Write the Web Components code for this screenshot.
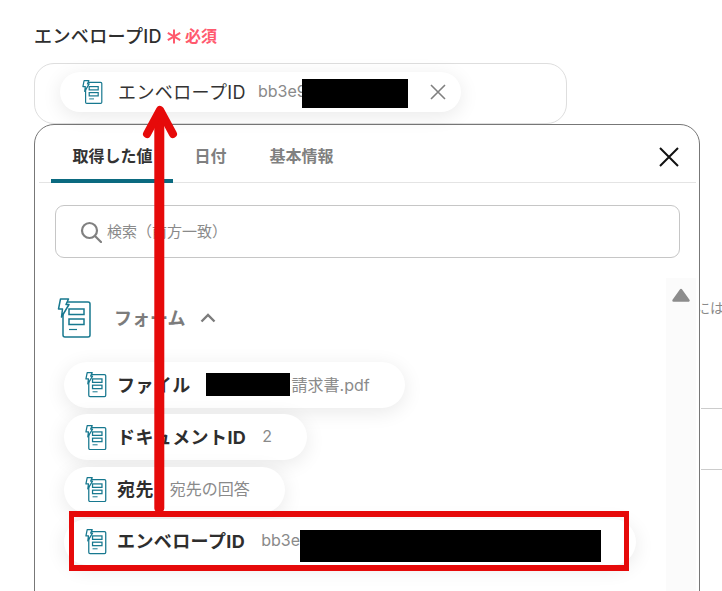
<!DOCTYPE html>
<html lang="ja">
<head>
<meta charset="utf-8">
<title>エンベロープID</title>
<style>
    html, body {margin: 0; height: 591px; overflow: hidden; background: #fff;}
    body {font-family: "Inter", "Noto Sans CJK JP", sans-serif; color: #2e2e2e;}
</style>
</head>
<body>
<form-page>
    <field-label slot="field" required>エンベロープID</field-label>
    <token-field slot="field" label="エンベロープID" value="bb3e9" mask="106"></token-field>
    <picker-panel slot="field">
        <picker-section title="フォーム">
            <value-chip label="ファイル"><mask-bar width="84" height="23" style="margin-left: -1px; top: -1px"></mask-bar><span style="margin-left: 2px">請求書.pdf</span></value-chip>
            <value-chip label="ドキュメントID"><span>2</span></value-chip>
            <value-chip label="宛先"><span>宛先の回答</span></value-chip>
            <value-chip label="エンベロープID"><span>bb3e</span><mask-bar width="301" height="32" style="top: 4px"></mask-bar></value-chip>
        </picker-section>
    </picker-panel>
    <side-peek slot="side"></side-peek>
</form-page>
<call-out></call-out>

<script>
class FormIcon extends HTMLElement {
    constructor() {
        super();
        this.attachShadow({ mode: 'open' });
    }

    connectedCallback() {
        var w = this.getAttribute('size') || 22
        var sw = this.getAttribute('stroke') || 2
        this.shadowRoot.innerHTML = `
<style>
    :host {display: block; flex: none; line-height: 0;}
</style>
<svg width="${w}" viewBox="0 0 35 40" fill="none" stroke="#17788f" stroke-width="${sw}">
    <rect x="6" y="4" width="27" height="35" rx="2"/>
    <rect x="12" y="11" width="15" height="5.5"/>
    <rect x="12" y="21" width="15" height="5.5"/>
    <path d="M12 31.500H20" stroke-width="${sw * 0.8}"/>
    <path d="M3.500 1H11.500L9 6.500H12L4.500 19L5.500 11H1.500Z" fill="#fff" stroke-linejoin="round"/>
</svg>`
    }
}
window.customElements.define('form-icon', FormIcon);

class MaskBar extends HTMLElement {
    constructor() {
        super();
        this.attachShadow({ mode: 'open' });
    }

    connectedCallback() {
        this.shadowRoot.innerHTML = `
<style>
    :host {display: block; flex: none; background: #000; position: relative;
        width: ${this.getAttribute('width')}px; height: ${this.getAttribute('height')}px;}
</style>`
    }
}
window.customElements.define('mask-bar', MaskBar);

class FormPage extends HTMLElement {
    constructor() {
        super();
        this.attachShadow({ mode: 'open' });
    }

    connectedCallback() {
        this.shadowRoot.innerHTML = `
<style>
    :host {display: flex; height: 591px; overflow: hidden;}
    .main {width: 666px; flex: none; margin-left: 34px; padding-top: 26px; position: relative; z-index: 1;}
    .side {flex: 1; min-width: 0;}
</style>
<div class="main"><slot name="field"></slot></div>
<div class="side"><slot name="side"></slot></div>`
    }
}
window.customElements.define('form-page', FormPage);

class FieldLabel extends HTMLElement {
    constructor() {
        super();
        this.attachShadow({ mode: 'open' });
    }

    connectedCallback() {
        this.shadowRoot.innerHTML = `
<style>
    :host {display: flex; align-items: center; height: 20px; margin-bottom: 17px;
        font-size: 18px; font-weight: 500; color: #2e2e2e; white-space: nowrap; letter-spacing: .4px;}
    .txt {padding-bottom: 2px;}
    .star {width: 14px; height: 15px; margin: 0 4px 0 5px;}
    .req {font-size: 16px; font-weight: 700; color: #ff5a6e; letter-spacing: 0; padding-bottom: 2px;}
</style>
<span class="txt"><slot></slot></span>
<svg class="star" viewBox="0 0 14 15" stroke="#ff5a6e" stroke-width="2">
    <path d="M7 0.500V14.500M0.800 3.800L13.200 11.200M13.200 3.800L0.800 11.200"/>
</svg>
<span class="req">必須</span>`
    }
}
window.customElements.define('field-label', FieldLabel);

class TokenField extends HTMLElement {
    constructor() {
        super();
        this.attachShadow({ mode: 'open' });
    }

    connectedCallback() {
        this.shadowRoot.innerHTML = `
<style>
    :host {display: block; box-sizing: border-box; width: 533px; height: 61px;
        border: 1px solid #dedede; border-radius: 20px; padding: 8px 0 0 25px; background: #fff;}
    .chip {display: inline-flex; align-items: center; box-sizing: border-box; height: 40px; width: 401px;
        padding-left: 22px; border-radius: 20px; background: #fff;
        box-shadow: 0 4px 20px rgba(0,0,0,.09); white-space: nowrap;}
    .label {font-size: 18px; margin-left: 15px; color: #333; letter-spacing: .4px; padding-bottom: 2px;}
    .value {font-size: 16px; color: #8a8a8a; margin-left: 12px; padding-bottom: 2px;}
    mask-bar {margin-left: -5px; top: 1px;}
    .close {margin-left: 22px; width: 16px; height: 16px;}
</style>
<div class="chip">
    <form-icon size="21"></form-icon>
    <span class="label">${this.getAttribute('label')}</span>
    <span class="value">${this.getAttribute('value')}</span>
    <mask-bar width="${this.getAttribute('mask')}" height="29"></mask-bar>
    <svg class="close" viewBox="0 0 16 16" stroke="#808080" stroke-width="1.600">
        <path d="M1 1L15 15M15 1L1 15"/>
    </svg>
</div>`
    }
}
window.customElements.define('token-field', TokenField);

class PickerPanel extends HTMLElement {
    constructor() {
        super();
        this.attachShadow({ mode: 'open' });
    }

    connectedCallback() {
        this.shadowRoot.innerHTML = `
<style>
    :host {display: block; box-sizing: border-box; width: 666px; height: 520px; background: #fff;
        border: 1px solid #777; border-radius: 20px; overflow: hidden;}
    .tabs {display: flex; align-items: center; height: 57px; margin: 0 3px 0 4px; padding-left: 12px;
        border-bottom: 1px solid #e4e4e4; position: relative;}
    .tab {display: flex; align-items: center; height: 100%; padding: 2px 21.500px 0; box-sizing: border-box;
        font-size: 16px; font-weight: 700; color: #808080; white-space: nowrap;}
    .tab.on {color: #333; width: 122px; border-bottom: 4px solid #0b6a80; border-radius: 5px 5px 0 0;
        padding-top: 6px; margin-bottom: -1px; height: calc(100% + 1px);}
    .x {margin: 6px 17px 0 auto; width: 20px; height: 20px;}
    .search {display: flex; align-items: center; box-sizing: border-box; height: 53px;
        margin: 22px 19px 0 20px; padding-left: 24px; border: 1px solid #c6c6c6; border-radius: 9px;
        font-size: 15px; color: #8a8a8a;}
    .search svg {width: 22px; height: 22px; margin-right: 5px;}
    .search span {padding-bottom: 2px;}
    .body {display: flex; margin-top: 20px; height: 320px;}
    .list {flex: 1; min-width: 0;}
    .scroll {flex: none; width: 30px; margin-right: 3px; background: #fbfbfb; display: flex; justify-content: center; padding-top: 10px;}
    .scroll svg {width: 18px; height: 14px;}
</style>
<div class="tabs">
    <div class="tab on">取得した値</div>
    <div class="tab">日付</div>
    <div class="tab">基本情報</div>
    <svg class="x" viewBox="0 0 20 20" stroke="#111" stroke-width="2"><path d="M1 1L19 19M19 1L1 19"/></svg>
</div>
<div class="search">
    <svg viewBox="0 0 22 22" fill="none" stroke="#808080" stroke-width="2.200"><circle cx="9.500" cy="9.500" r="7.500"/><path d="M15 15L21 21" stroke-linecap="round"/></svg>
    <span>検索（前方一致）</span>
</div>
<div class="body">
    <div class="list"><slot></slot></div>
    <div class="scroll"><svg viewBox="0 0 18 14"><path d="M9 2L16.500 12.500H1.500Z" fill="#8c8c8c" stroke="#8c8c8c" stroke-width="2.400" stroke-linejoin="round"/></svg></div>
</div>`
    }
}
window.customElements.define('picker-panel', PickerPanel);

class PickerSection extends HTMLElement {
    constructor() {
        super();
        this.attachShadow({ mode: 'open' });
    }

    connectedCallback() {
        this.shadowRoot.innerHTML = `
<style>
    :host {display: block; padding: 20px 0 0 22px;}
    .head {display: flex; align-items: center; height: 40px; margin-bottom: 24px;}
    .title {font-size: 18px; font-weight: 700; color: #7c7c7c; margin-left: 22px; padding-bottom: 2px;}
    .chev {width: 16px; height: 10px; margin-left: 15px;}
    .chips {display: flex; flex-direction: column; align-items: flex-start; gap: 6.330px; margin-left: 7px;}
</style>
<div class="head">
    <form-icon size="35" stroke="1.500"></form-icon>
    <span class="title">${this.getAttribute('title')}</span>
    <svg class="chev" viewBox="0 0 16 10" fill="none" stroke="#7c7c7c" stroke-width="2.400"><path d="M1.500 8.500L8 2L14.500 8.500"/></svg>
</div>
<div class="chips"><slot></slot></div>`
    }
}
window.customElements.define('picker-section', PickerSection);

class ValueChip extends HTMLElement {
    constructor() {
        super();
        this.attachShadow({ mode: 'open' });
    }

    connectedCallback() {
        this.shadowRoot.innerHTML = `
<style>
    :host {display: inline-flex; align-items: center; box-sizing: border-box; height: 46px;
        padding: 0 35px 0 21px; border-radius: 23px; background: #fff;
        box-shadow: 0 4px 20px rgba(0,0,0,.09); white-space: nowrap;}
    .label {font-size: 18px; font-weight: 700; color: #2e2e2e; margin-left: 10px; letter-spacing: .4px; padding-bottom: 3px;}
    .value {display: flex; align-items: center; font-size: 16px; color: #8a8a8a; margin-left: 16px; padding-bottom: 3px;}
    ::slotted(mask-bar) {margin-top: 3px;}
</style>
<form-icon size="22"></form-icon>
<span class="label">${this.getAttribute('label')}</span>
<span class="value"><slot></slot></span>`
    }
}
window.customElements.define('value-chip', ValueChip);

class SidePeek extends HTMLElement {
    constructor() {
        super();
        this.attachShadow({ mode: 'open' });
    }

    connectedCallback() {
        this.shadowRoot.innerHTML = `
<style>
    :host {display: block; padding-top: 299px; font-size: 14px; color: #8a8a8a; white-space: nowrap;}
    .txt {height: 18px; line-height: 18px; margin-left: -4px;}
    .rule {height: 1px; background: #ccc; margin-left: 1px;}
</style>
<div class="txt">には</div>
<div class="rule" style="margin-top: 91px"></div>
<div class="rule" style="margin-top: 60px"></div>`
    }
}
window.customElements.define('side-peek', SidePeek);

// annotation drawn over the screenshot: arrow and highlight box
class CallOut extends HTMLElement {
    constructor() {
        super();
        this.attachShadow({ mode: 'open' });
    }

    connectedCallback() {
        this.shadowRoot.innerHTML = `
<style>
    :host {display: block; position: absolute; left: 0; top: 0; z-index: 2; width: 722px; height: 591px; pointer-events: none;}
    svg {position: absolute; left: 0; top: 0;}
    .box {position: absolute; left: 69px; top: 511px; width: 560px; height: 60px; box-sizing: border-box;
        border: solid #e60a0a; border-width: 6px 5px;}
</style>
<svg width="722" height="591" fill="none" stroke="#e60a0a" stroke-width="10" stroke-linecap="round" stroke-linejoin="round">
    <path d="M159.300 115V508"/>
    <path d="M147 134L160 110L173 134" stroke-width="8"/>
</svg>
<div class="box"></div>`
    }
}
window.customElements.define('call-out', CallOut);
</script>
</body>
</html>
